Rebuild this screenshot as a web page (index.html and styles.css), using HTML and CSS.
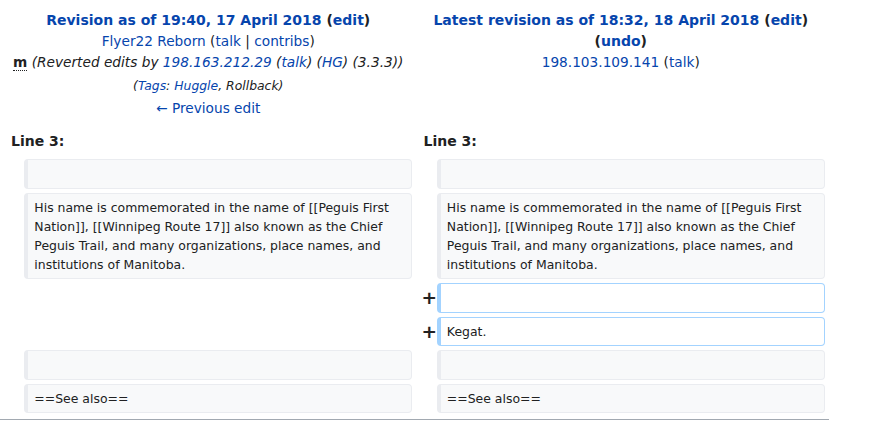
FILE: index.html
```html
<!DOCTYPE html>
<html lang="en">
<head>
<meta charset="utf-8">
<title>Diff</title>
<link rel="stylesheet" href="styles.css">
</head>
<body>
<div class="page">
<table class="diff">
<colgroup><col class="c-marker"><col class="c-content"><col class="c-marker"><col class="c-content"></colgroup>
<tr>
<td colspan="2" class="title">
<div class="t-head"><a href="#">Revision as of 19:40, 17 April 2018</a> <span class="paren">(<a href="#">edit</a>)</span></div>
<div class="t-line"><a href="#">Flyer22 Reborn</a> (<a href="#">talk</a> | <a href="#">contribs</a>)</div>
<div class="t-line"><abbr class="minor">m</abbr> <span class="comment">(Reverted edits by <a href="#">198.163.212.29</a> (<a href="#">talk</a>) (<a href="#">HG</a>) (3.3.3))</span></div>
<div class="tags">(<a href="#">Tags</a>: <a href="#">Huggle</a>, Rollback)</div>
<div><a href="#">← Previous edit</a></div>
</td>
<td colspan="2" class="title">
<div class="t-head"><a href="#">Latest revision as of 18:32, 18 April 2018</a> <span class="paren">(<a href="#">edit</a>)</span></div>
<div class="t-head t-line"><span class="paren">(<a href="#">undo</a>)</span></div>
<div class="t-line"><a href="#">198.103.109.141</a> (<a href="#">talk</a>)</div>
</td>
</tr>
<tr>
<td colspan="2" class="lineno">Line 3:</td>
<td colspan="2" class="lineno">Line 3:</td>
</tr>
<tr>
<td class="marker"></td><td class="context"><div><br></div></td>
<td class="marker"></td><td class="context"><div><br></div></td>
</tr>
<tr>
<td class="marker"></td><td class="context"><div>His name is commemorated in the name of [[Peguis First Nation]], [[Winnipeg Route 17]] also known as the Chief Peguis Trail, and many organizations, place names, and institutions of Manitoba.</div></td>
<td class="marker"></td><td class="context"><div>His name is commemorated in the name of [[Peguis First Nation]], [[Winnipeg Route 17]] also known as the Chief Peguis Trail, and many organizations, place names, and institutions of Manitoba.</div></td>
</tr>
<tr>
<td colspan="2" class="empty"></td>
<td class="marker plus">+</td><td class="added"><div><br></div></td>
</tr>
<tr>
<td colspan="2" class="empty"></td>
<td class="marker plus">+</td><td class="added"><div>Kegat.</div></td>
</tr>
<tr>
<td class="marker"></td><td class="context"><div><br></div></td>
<td class="marker"></td><td class="context"><div><br></div></td>
</tr>
<tr>
<td class="marker"></td><td class="context"><div>==See also==</div></td>
<td class="marker"></td><td class="context"><div>==See also==</div></td>
</tr>
</table>
<div class="rule"></div>
</div>
</body>
</html>
```

FILE: styles.css
```css
html, body {
  margin: 0;
  padding: 0;
  background: #fff;
}
body {
  font-family: "DejaVu Sans", sans-serif;
  font-size: 13.7px;
  color: #202122;
}
a {
  color: #0645ad;
  text-decoration: none;
}
.page {
  width: 829px;
}
table.diff {
  width: 829px;
  table-layout: fixed;
  border-collapse: separate;
  border-spacing: 4px;
  background: #fff;
}
.c-marker { width: 2%; }
.c-content { width: 48%; }
table.diff td {
  padding: 4.6px 7px;
}
td.title {
  text-align: center;
  vertical-align: top;
  line-height: 22px;
}
.t-head {
  font-weight: bold;
  font-size: 14px;
}
.t-line {
  line-height: 21.5px;
}
.paren {
  color: #202122;
}
abbr.minor {
  font-weight: bold;
  text-decoration: none;
  border-bottom: 1px dotted #202122;
  line-height: 1;
}
.comment {
  font-style: italic;
  color: #202122;
}
.tags {
  font-style: italic;
  font-size: 12.4px;
  line-height: 23px;
}
td.lineno {
  font-weight: bold;
  font-size: 14px;
  line-height: 19px;
}
table.diff td.marker {
  padding: 0 0 0 5px;
  font-weight: bold;
  font-size: 18.5px;
  line-height: 19px;
  vertical-align: middle;
}
table.diff td.plus {
  line-height: 29.8px;
}
table.diff td.context, table.diff td.added {
  font-size: 12.45px;
  line-height: 19px;
  padding: 4.1px 6.2px;
  vertical-align: top;
  white-space: pre-wrap;
  border-style: solid;
  border-width: 1px 1px 1px 4px;
  border-radius: 4px;
  word-wrap: break-word;
}
td.context {
  background: #f8f9fa;
  border-color: #eaecf0;
  color: #202122;
}
td.added {
  background: #fff;
  border-color: #a3d3ff;
  color: #202122;
}
.rule {
  margin-top: 2px;
  border-top: 1px solid #a2a9b1;
}
```
